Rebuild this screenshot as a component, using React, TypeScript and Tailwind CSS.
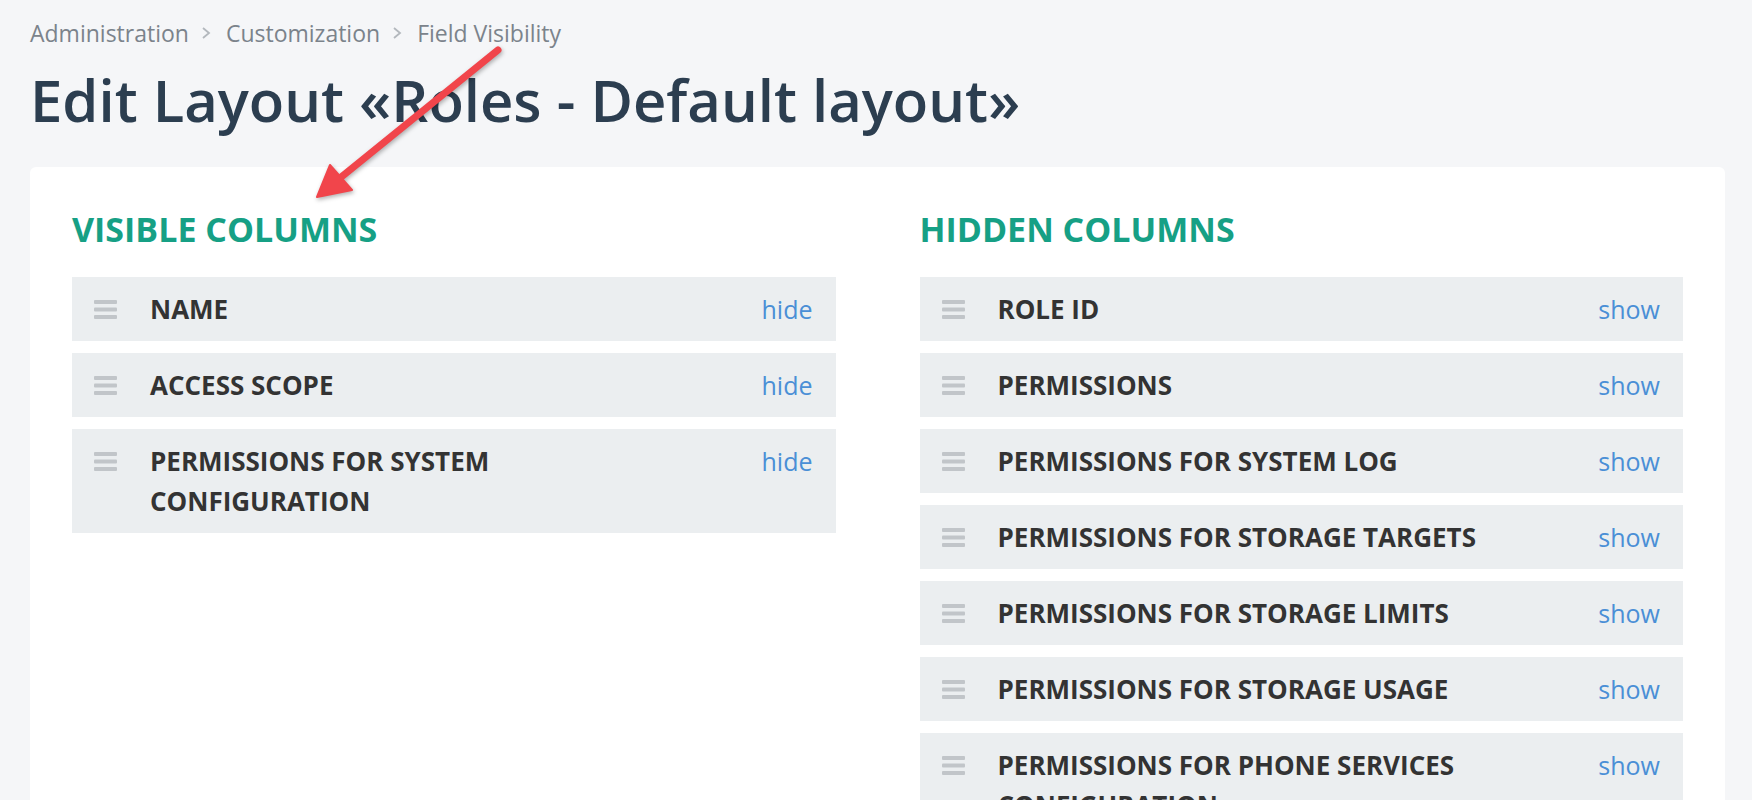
import React from "react";

const visibleColumns = ["NAME", "ACCESS SCOPE", "PERMISSIONS FOR SYSTEM CONFIGURATION"];

const hiddenColumns = [
  "ROLE ID",
  "PERMISSIONS",
  "PERMISSIONS FOR SYSTEM LOG",
  "PERMISSIONS FOR STORAGE TARGETS",
  "PERMISSIONS FOR STORAGE LIMITS",
  "PERMISSIONS FOR STORAGE USAGE",
  "PERMISSIONS FOR PHONE SERVICES CONFIGURATION",
];

export default function App() {
  return (
    <div className="relative min-h-screen bg-[#f5f6f8] pl-[30px] pr-[27px] pt-[17px] pb-10 font-['Open_Sans',sans-serif]">
      {/* Breadcrumb */}
      <nav className="flex h-8 items-center text-[23px] leading-8 text-[#7b838b]">
        <span>Administration</span>
        <Chevron />
        <span>Customization</span>
        <Chevron />
        <span>Field Visibility</span>
      </nav>

      <h1 className="mt-[17px] text-[58px] font-semibold leading-[67px] text-[#2c3e50]">
        Edit Layout «Roles - Default layout»
      </h1>

      {/* Card with both column lists */}
      <div className="mt-[34px] grid grid-cols-2 gap-x-[84px] rounded-md bg-white px-[42px] pt-[41px] pb-10">
        <ColumnList title="VISIBLE COLUMNS" items={visibleColumns} action="hide" />
        <ColumnList title="HIDDEN COLUMNS" items={hiddenColumns} action="show" />
      </div>

      {/* Annotation arrow */}
      <svg
        className="pointer-events-none absolute left-0 top-0 drop-shadow-[1px_2px_2px_rgba(0,0,0,0.3)]"
        width="1752"
        height="800"
        viewBox="0 0 1752 800"
        fill="none"
      >
        <line x1="498" y1="50" x2="340" y2="178" stroke="#f1454b" strokeWidth="7" strokeLinecap="round" />
        <polygon points="317,197 330,165 352,190" fill="#f1454b" stroke="#f1454b" strokeWidth="2" strokeLinejoin="round" />
      </svg>
    </div>
  );
}

function Chevron() {
  return (
    <svg className="ml-3 mr-[15px]" width="10" height="12" viewBox="0 0 10 12" fill="none">
      <polyline points="2,1 8,6 2,11" stroke="#b3b8bd" strokeWidth="1.8" />
    </svg>
  );
}

function ColumnList({ title, items, action }: { title: string; items: string[]; action: string }) {
  return (
    <div>
      <h2 className="text-[34px] font-bold leading-[42px] text-[#16a085]">{title}</h2>
      <div className="mt-[27px] flex flex-col gap-3">
        {items.map((item) => (
          <div key={item} className="flex items-start bg-[#ebeef0] py-3 pl-[22px] pr-[23px]">
            <div className="flex h-10 w-[23px] shrink-0 items-center">
              <DragHandle />
            </div>
            <div className="ml-[33px] max-w-[520px] text-[26px] font-bold leading-10 text-[#333333]">{item}</div>
            <a href="#" className="ml-auto text-[25px] leading-10 text-[#4a8fd6]">
              {action}
            </a>
          </div>
        ))}
      </div>
    </div>
  );
}

function DragHandle() {
  return (
    <svg width="23" height="19" viewBox="0 0 23 19">
      <rect x="0" y="0" width="23" height="4" rx="1" fill="#c1c5c9" />
      <rect x="0" y="7.5" width="23" height="4" rx="1" fill="#c1c5c9" />
      <rect x="0" y="15" width="23" height="4" rx="1" fill="#c1c5c9" />
    </svg>
  );
}
